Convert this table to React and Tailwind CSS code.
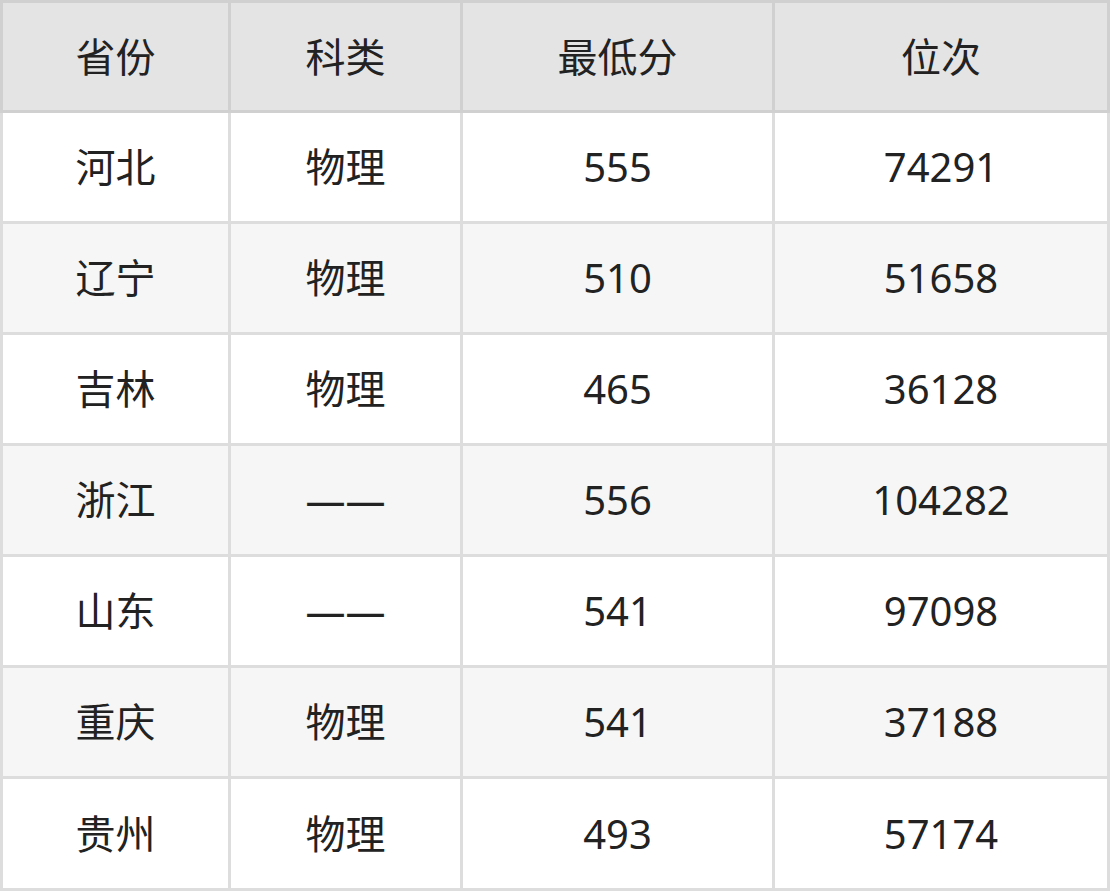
import React from 'react';

const rows = [
  ['河北', '物理', '555', '74291'],
  ['辽宁', '物理', '510', '51658'],
  ['吉林', '物理', '465', '36128'],
  ['浙江', '——', '556', '104282'],
  ['山东', '——', '541', '97098'],
  ['重庆', '物理', '541', '37188'],
  ['贵州', '物理', '493', '57174'],
];

const headers = ['省份', '科类', '最低分', '位次'];
// widths include the right border (first column also holds the left one)
const widths = ['w-[231px] border-l-[3px]', 'w-[232px]', 'w-[312px]', 'w-[335px]'];

export default function App() {
  return (
    <div
      className="w-[1110px] h-[891px] bg-white text-[40px] text-[#222222]"
      style={{ fontFamily: '"Noto Sans", "Noto Sans CJK SC", sans-serif' }}
    >
      <div className="flex h-[113px] bg-[#e4e4e4]">
        {headers.map((h, j) => (
          <div
            key={h}
            className={`${widths[j]} shrink-0 flex items-center justify-center border-t-[3px] border-r-[3px] border-b-[3px] border-[#d0d0d0]`}
          >
            {h}
          </div>
        ))}
      </div>
      {rows.map((r, i) => (
        <div
          key={r[0]}
          className={`flex ${i === rows.length - 1 ? 'h-[112px]' : 'h-[111px]'} ${i % 2 === 1 ? 'bg-[#f6f6f6]' : 'bg-white'}`}
        >
          {r.map((c, j) => (
            <div
              key={j}
              className={`${widths[j]} shrink-0 flex items-center justify-center border-r-[3px] border-b-[3px] border-[#dddddd]`}
            >
              {c}
            </div>
          ))}
        </div>
      ))}
    </div>
  );
}
